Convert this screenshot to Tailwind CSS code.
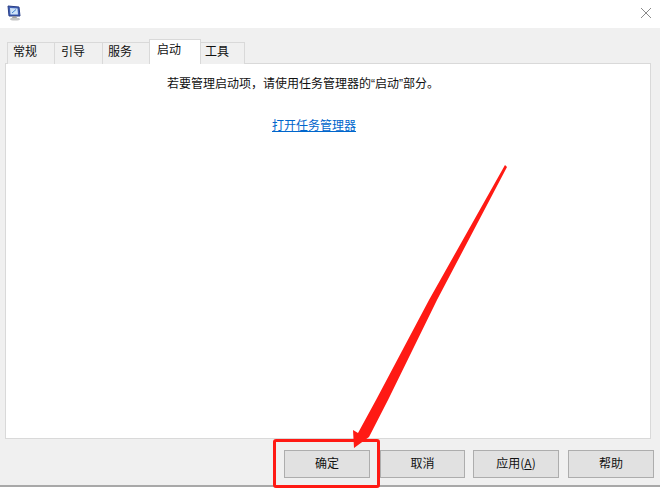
<!DOCTYPE html>
<html lang="zh-CN">
<head>
    <meta charset="UTF-8">
    <title>系统配置</title>
    <script src="https://cdn.jsdelivr.net/npm/@tailwindcss/browser@4"></script>
</head>
<body class="relative w-[660px] h-[489px] overflow-hidden bg-white text-[12px] text-[#111] font-['Noto_Sans_CJK_SC','Liberation_Sans',sans-serif]">
    <!-- Title bar -->
    <div class="h-[28px] flex items-start justify-between bg-white">
        <svg class="ml-[7px] mt-[5px]" width="15" height="16" viewBox="0 0 15 16">
            <path d="M1 1 L12 2 L13 11 L2 11 Z" fill="#3f5fb5" stroke="#2b3f86" stroke-width="1"/>
            <path d="M3 3 L10.5 3.6 L11 9.5 L3.5 9.5 Z" fill="#cfe3f7"/>
            <path d="M5 8 L9 4.5" stroke="#3f7fd0" stroke-width="1"/>
            <path d="M6 11 L9 11 L10 13 L5 13 Z" fill="#9a9a9a"/>
            <ellipse cx="8" cy="14.2" rx="5" ry="1.4" fill="#c4c4c4"/>
        </svg>
        <svg class="mr-[9px] mt-[8px]" width="10" height="10" viewBox="0 0 10 10">
            <path d="M0 0 L10 10 M10 0 L0 10" stroke="#8a8a8a" stroke-width="1"/>
        </svg>
    </div>

    <!-- Dialog body -->
    <div class="h-[459px] bg-[#f0f0f0] border-b-2 border-[#a8a8a8] px-[5px] pt-[10px]">
        <!-- Tabs -->
        <div class="flex items-end h-[25px] pl-[2px] relative z-10 leading-none">
            <div class="w-[48px] h-[22px] -mb-[1px] pl-[5px] pb-[5px] flex items-center bg-[#f0f0f0] border border-b-0 border-[#d9d9d9]">常规</div>
            <div class="w-[49px] h-[22px] -mb-[1px] -ml-px pl-[6px] pb-[5px] flex items-center bg-[#f0f0f0] border border-b-0 border-[#d9d9d9]">引导</div>
            <div class="w-[48px] h-[22px] -mb-[1px] -ml-px pl-[5px] pb-[5px] flex items-center bg-[#f0f0f0] border border-b-0 border-[#d9d9d9]">服务</div>
            <div class="w-[52px] h-[25px] -mb-[1px] -ml-px pl-[7px] pb-[6px] flex items-center bg-white border border-b-0 border-[#d9d9d9]">启动</div>
            <div class="w-[45px] h-[22px] -mb-[1px] -ml-px pl-[4px] pb-[5px] flex items-center bg-[#f0f0f0] border border-b-0 border-[#d9d9d9]">工具</div>
        </div>

        <!-- Startup panel -->
        <div class="w-[646px] h-[376px] bg-white border border-[#d9d9d9] flex flex-col leading-none">
            <p class="mt-[13px] ml-[161px]">若要管理启动项，请使用任务管理器的<span class="font-['Liberation_Sans']">“</span>启动<span class="font-['Liberation_Sans']">”</span>部分。</p>
            <a class="mt-[29px] ml-[266px] text-[#0066cc] underline">打开任务管理器</a>
        </div>

        <!-- Buttons -->
        <div class="flex mt-[11px] ml-[279px] leading-none">
            <button class="w-[86px] h-[28px] pb-[2px] bg-[#e1e1e1] border border-[#adadad]">确定</button>
            <button class="w-[85px] h-[28px] pb-[2px] ml-[10px] bg-[#e1e1e1] border border-[#adadad]">取消</button>
            <button class="w-[86px] h-[28px] pb-[2px] ml-[8px] bg-[#e1e1e1] border border-[#adadad]">应用(<span class="underline">A</span>)</button>
            <button class="w-[86px] h-[28px] pb-[2px] ml-[9px] bg-[#e1e1e1] border border-[#adadad]">帮助</button>
        </div>
    </div>

    <!-- Red annotations -->
    <div class="absolute left-[273px] top-[439px] w-[107px] h-[49px] border-[3px] border-[#ff1a14] rounded-[3px]"></div>
    <svg class="absolute left-0 top-0 pointer-events-none" width="660" height="489" viewBox="0 0 660 489">
        <path d="M505 165 L507 167 L437 300 L388 400 L369 437 L354 448 L353 430 L358 433 L376 400 L429 300 Z" fill="#ff1a14"/>
    </svg>
</body>
</html>
